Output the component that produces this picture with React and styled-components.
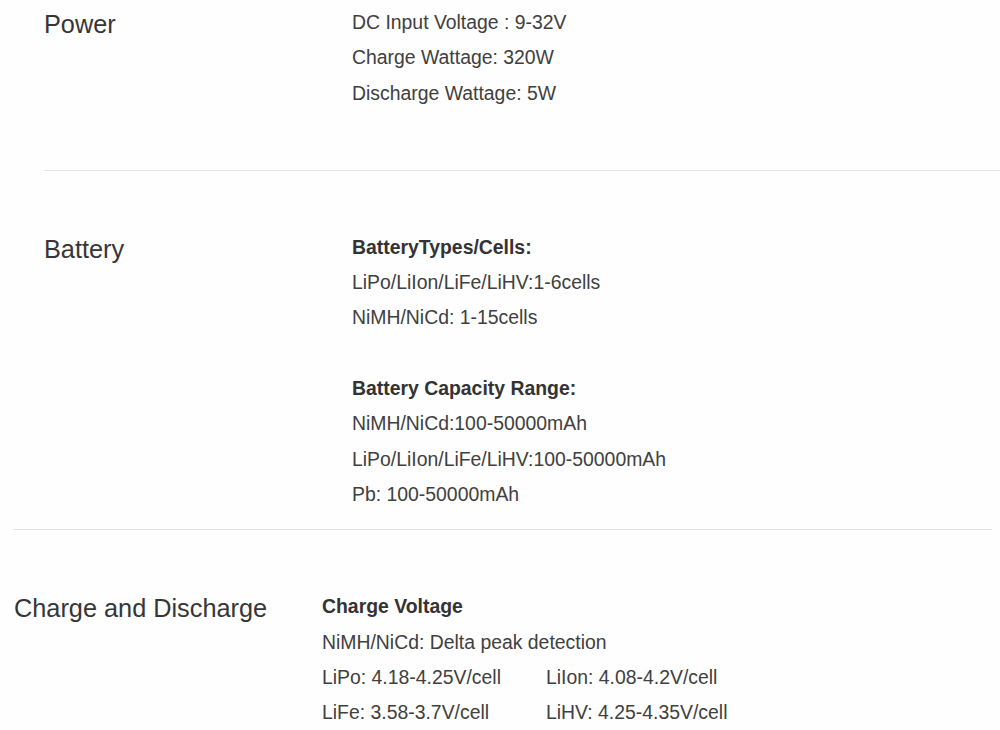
import React from 'react'
import styled, { createGlobalStyle } from 'styled-components'

const GlobalStyle = createGlobalStyle`
  html, body {
    margin: 0;
    padding: 0;
    background: #fefefe;
  }
  body {
    font-family: "Liberation Sans", Arial, sans-serif;
    color: #333;
    overflow: hidden;
  }
`

const sections = [
  {
    title: 'Power',
    indent: 44,
    top: 5,
    bottom: 59,
    groups: [
      { lines: ['DC Input Voltage : 9-32V', 'Charge Wattage: 320W', 'Discharge Wattage: 5W'] },
    ],
  },
  {
    title: 'Battery',
    indent: 44,
    top: 59,
    bottom: 17,
    groups: [
      { head: 'BatteryTypes/Cells:', lines: ['LiPo/LiIon/LiFe/LiHV:1-6cells', 'NiMH/NiCd: 1-15cells'] },
      {
        head: 'Battery Capacity Range:',
        lines: ['NiMH/NiCd:100-50000mAh', 'LiPo/LiIon/LiFe/LiHV:100-50000mAh', 'Pb: 100-50000mAh'],
      },
    ],
  },
]

const voltages = [
  ['LiPo: 4.18-4.25V/cell', 'LiIon: 4.08-4.2V/cell'],
  ['LiFe: 3.58-3.7V/cell', 'LiHV: 4.25-4.35V/cell'],
]

function App() {
  return (
    <Page>
      <GlobalStyle />
      {sections.map((s, i) => (
        <React.Fragment key={s.title}>
          <Section $indent={s.indent} $top={s.top} $bottom={s.bottom}>
            <Label>{s.title}</Label>
            <Values>
              {s.groups.map((g, j) => (
                <Group key={j} $spaced={j > 0}>
                  {g.head && <Head>{g.head}</Head>}
                  {g.lines.map((l) => (
                    <Line key={l}>{l}</Line>
                  ))}
                </Group>
              ))}
            </Values>
          </Section>
          {i === 0 && <Divider $left={44} $right={0} />}
          {i === 1 && <Divider $left={13} $right={8} />}
        </React.Fragment>
      ))}
      <Section $indent={14} $top={59} $bottom={20}>
        <Label>Charge and Discharge</Label>
        <Values>
          <Head>Charge Voltage</Head>
          <Line>NiMH/NiCd: Delta peak detection</Line>
          <VoltGrid>
            {voltages.flat().map((v) => (
              <Line key={v}>{v}</Line>
            ))}
          </VoltGrid>
        </Values>
      </Section>
    </Page>
  )
}

const Page = styled.div`
  width: 1000px;
  height: 730px;
  overflow: hidden;
`

const Section = styled.section`
  display: grid;
  grid-template-columns: 308px 1fr;
  margin-left: ${(p) => p.$indent}px;
  padding-top: ${(p) => p.$top}px;
  padding-bottom: ${(p) => p.$bottom}px;
`

const Label = styled.h2`
  margin: 0;
  padding-top: 2px;
  font-size: 25.3px;
  font-weight: 400;
  line-height: 35.3px;
  color: #363636;
`

const Values = styled.div`
  display: flex;
  flex-direction: column;
  font-size: 19.4px;
  line-height: 35.3px;
`

const Group = styled.div`
  display: flex;
  flex-direction: column;
  margin-top: ${(p) => (p.$spaced ? '35.3px' : '0')};
`

const Head = styled.div`
  font-weight: 700;
  color: #333;
`

const Line = styled.div`
  color: #404040;
  white-space: nowrap;
`

const VoltGrid = styled.div`
  display: grid;
  grid-template-columns: 224px auto;
`

const Divider = styled.hr`
  border: 0;
  height: 1px;
  background: #e4e4e4;
  margin: 0 ${(p) => p.$right}px 0 ${(p) => p.$left}px;
`

export default App
